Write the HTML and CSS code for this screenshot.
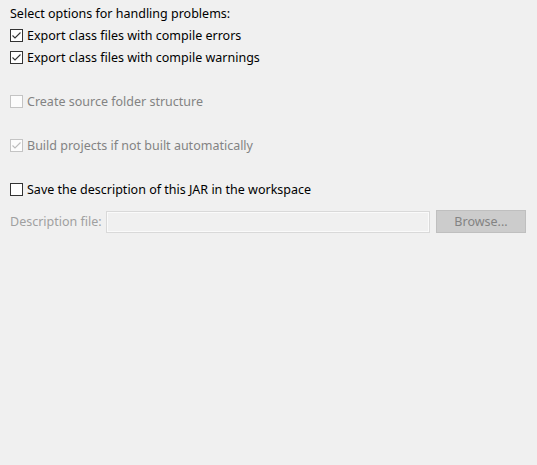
FILE: index.html
```html
<!DOCTYPE html>
<html>
<head>
<meta charset="utf-8">
<link rel="stylesheet" href="styles.css">
</head>
<body>
<div class="page">
  <div class="row label">Select options for handling problems:</div>
  <div class="row">
    <span class="box checked"><svg viewBox="0 0 13 13" width="13" height="13"><path d="M2.5 6.5 L5 9 L10.5 3.5" fill="none" stroke="#333" stroke-width="1.1"/></svg></span>
    <span class="text">Export class files with compile errors</span>
  </div>
  <div class="row">
    <span class="box checked"><svg viewBox="0 0 13 13" width="13" height="13"><path d="M2.5 6.5 L5 9 L10.5 3.5" fill="none" stroke="#333" stroke-width="1.1"/></svg></span>
    <span class="text">Export class files with compile warnings</span>
  </div>
  <div class="row blank"></div>
  <div class="row disabled">
    <span class="box"></span>
    <span class="text">Create source folder structure</span>
  </div>
  <div class="row blank"></div>
  <div class="row disabled">
    <span class="box"><svg viewBox="0 0 13 13" width="13" height="13"><path d="M2.5 6.5 L5 9 L10.5 3.5" fill="none" stroke="#bcbcbc" stroke-width="1.1"/></svg></span>
    <span class="text">Build projects if not built automatically</span>
  </div>
  <div class="row blank"></div>
  <div class="row">
    <span class="box"></span>
    <span class="text">Save the description of this JAR in the workspace</span>
  </div>
  <div class="field-row">
    <span class="field-label">Description file:</span>
    <span class="field"></span>
    <span class="button">Browse...</span>
  </div>
</div>
</body>
</html>
```

FILE: styles.css
```css
html, body {
  margin: 0;
  padding: 0;
  background: #f0f0f0;
}
.page {
  width: 537px;
  height: 465px;
  box-sizing: border-box;
  padding: 2px 11px 0 10px;
  font-family: "Noto Sans", "Liberation Sans", sans-serif;
  font-size: 12.5px;
  color: #000;
  display: flex;
  flex-direction: column;
}
.row {
  height: 22px;
  display: flex;
  align-items: center;
  gap: 4px;
  white-space: nowrap;
}
.box {
  width: 13px;
  height: 13px;
  box-sizing: border-box;
  border: 1px solid #333;
  background: #fff;
  display: flex;
  flex: none;
  position: relative;
}
.box svg {
  position: absolute;
  left: -1px;
  top: -1px;
}
.disabled {
  color: #838383;
}
.disabled .box {
  border-color: #c4c4c4;
  background: #fcfcfc;
}
.field-row {
  margin-top: 10px;
  display: flex;
  align-items: center;
  gap: 4px;
  height: 23px;
}
.field-label {
  color: #a0a0a0;
  white-space: nowrap;
}
.field {
  flex: 1;
  height: 22px;
  box-sizing: border-box;
  border: 1px solid #d9d9d9;
  box-shadow: inset 0 0 0 1px #fafafa;
  background: #f0f0f0;
  margin-right: 2px;
}
.button {
  width: 90px;
  height: 23px;
  box-sizing: border-box;
  border: 1px solid #bfbfbf;
  background: #cccccc;
  color: #838383;
  display: flex;
  align-items: center;
  justify-content: center;
}
```
